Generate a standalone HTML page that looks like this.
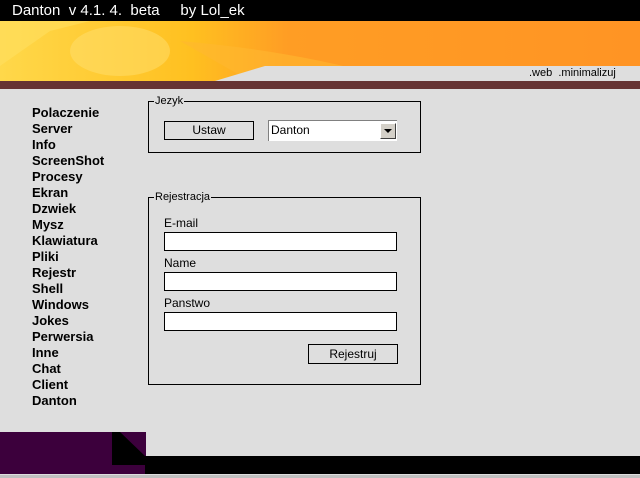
<!DOCTYPE html>
<html><head><style>
*{margin:0;padding:0;box-sizing:border-box}
body{width:640px;height:478px;background:#dedede;position:relative;overflow:hidden;font-family:"Liberation Sans",sans-serif;font-size:12px;color:#000}
.a{position:absolute}
.title{left:0;top:0;width:640px;height:21px;background:#000;color:#fff;font-size:15px;line-height:21px;padding-left:12px;white-space:pre}
.banner{left:0;top:21px;width:640px;height:60px;background:linear-gradient(90deg,#ffd84a 0%,#ffc020 30%,#ff9d24 45%,#ff9424 100%)}
.menu div{font-weight:bold;font-size:13px;height:16px;line-height:16px}
.box{border:1px solid #000}
.lg{background:#dedede;padding:0 1px;font-size:11px;line-height:12px}
.btn{border:1px solid #000;text-align:center;line-height:17px}
.in{background:#fff;border:1px solid #000}
</style></head><body>
<div class="a title">Danton  v 4.1. 4.  beta     by Lol_ek</div>
<div class="a banner"></div>
<svg class="a" style="left:0;top:21px" width="640" height="60">
<path d="M0 45 L50 10 L90 0 L0 0Z" fill="#ffe060" opacity=".6"/>
<ellipse cx="120" cy="30" rx="50" ry="25" fill="#ffe070" opacity=".5"/>
<path d="M180 20 Q300 30 400 60 L250 60Z" fill="#ffb830" opacity=".6"/>
<path d="M215 60 L265 45 L640 45 L640 60Z" fill="#dedede"/>
</svg>
<div class="a" style="left:529px;top:67px;font-size:11px">.web&nbsp; .minimalizuj</div>
<div class="a" style="left:0;top:81px;width:640px;height:8px;background:#663333"></div>
<div class="a menu" style="left:32px;top:105px">
<div>Polaczenie</div><div>Server</div><div>Info</div><div>ScreenShot</div><div>Procesy</div><div>Ekran</div><div>Dzwiek</div><div>Mysz</div><div>Klawiatura</div><div>Pliki</div><div>Rejestr</div><div>Shell</div><div>Windows</div><div>Jokes</div><div>Perwersia</div><div>Inne</div><div>Chat</div><div>Client</div><div>Danton</div>
</div>
<div class="a box" style="left:148px;top:101px;width:273px;height:52px"></div>
<div class="a lg" style="left:154px;top:95px">Jezyk</div>
<div class="a btn" style="left:164px;top:121px;width:90px;height:19px">Ustaw</div>
<div class="a" style="left:268px;top:120px;width:129px;height:21px;background:#fff;border-top:1px solid #808080;border-left:1px solid #808080;padding:2px 0 0 2px;font-size:12px">Danton
<div class="a" style="right:1px;top:2px;width:16px;height:16px;background:#d4d0c8;border:1px solid;border-color:#fff #404040 #404040 #fff"><div class="a" style="left:3px;top:5px;border-left:4px solid transparent;border-right:4px solid transparent;border-top:4px solid #000"></div></div></div>
<div class="a box" style="left:148px;top:197px;width:273px;height:188px"></div>
<div class="a lg" style="left:154px;top:191px">Rejestracja</div>
<div class="a" style="left:164px;top:216px">E-mail</div>
<div class="a in" style="left:164px;top:232px;width:233px;height:19px"></div>
<div class="a" style="left:164px;top:256px">Name</div>
<div class="a in" style="left:164px;top:272px;width:233px;height:19px"></div>
<div class="a" style="left:164px;top:296px">Panstwo</div>
<div class="a in" style="left:164px;top:312px;width:233px;height:19px"></div>
<div class="a btn" style="left:308px;top:344px;width:90px;height:20px;line-height:18px">Rejestruj</div>
<svg class="a" style="left:0;top:430px" width="640" height="48">
<rect x="0" y="2" width="146" height="42" fill="#3c003c"/>
<path d="M112 2 L120 2 L145 26 L640 26 L640 44 L145 44 L145 35 L112 35Z" fill="#000"/>
<rect x="0" y="45" width="640" height="3" fill="#c0c0c0"/>
</svg>
</body></html>
